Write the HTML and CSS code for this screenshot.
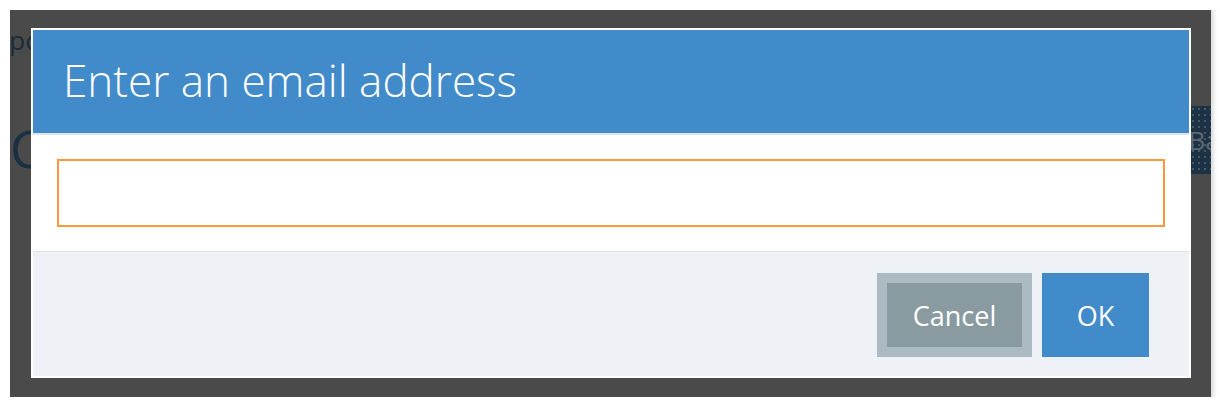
FILE: index.html
```html
<!DOCTYPE html>
<html>
<head>
  <title>Enter an email address</title>
<link rel="stylesheet" href="styles.css"></head>
<body>
  <div class="screen">
    <div class="page">
      <h2 class="page-title">Import your contacts from a list and then add them later</h2>
      <div class="page-row">
        <span class="page-step">C</span>
        <button class="page-back" type="button">Back to list</button>
      </div>
    </div>

    <div class="modal">
      <div class="modal-header">
        <h1>Enter an email address</h1>
      </div>
      <div class="modal-body">
        <input type="email" class="email-input">
      </div>
      <div class="modal-footer">
        <button type="button" class="btn btn-cancel">Cancel</button>
        <button type="button" class="btn btn-ok">OK</button>
      </div>
    </div>
  </div>
</body>
</html>
```

FILE: styles.css
```css
body {
    margin: 10px 0 0 10px;
    background: #ffffff;
    font-family: "Open Sans", "Liberation Sans", sans-serif;
  }

  .screen {
    position: relative;
    width: 1201px;
    height: 387px;
    background: #4a4a4a;
    overflow: hidden;
    box-shadow: 0 0 5px 2px rgba(0, 0, 0, 0.18);
  }

  /* dimmed page behind the dialog */
  .page {
    padding-top: 10px;
  }

  .page-title {
    margin: 0 0 0 -32px;
    font-size: 26px;
    font-weight: 400;
    line-height: 40px;
    color: #1b2b3b;
    white-space: nowrap;
  }

  .page-row {
    display: flex;
    align-items: flex-start;
    margin-top: 52px;
  }

  .page-step {
    margin: 10px 0 0 0;
    font-size: 52px;
    line-height: 52px;
    color: #1b2f44;
  }

  .page-back {
    flex-shrink: 0;
    margin-left: auto;
    margin-right: -130px;
    margin-top: -6px;
    height: 68px;
    padding: 0 22px;
    border: none;
    background-color: #1e3246;
    background-image: radial-gradient(rgba(120, 140, 160, 0.45) 0.8px, transparent 1px);
    background-size: 6px 6px;
    color: #5d6873;
    font-family: "Open Sans", sans-serif;
    font-size: 26px;
    white-space: nowrap;
  }

  /* dialog */
  .modal {
    position: absolute;
    left: 21px;
    top: 18px;
    width: 1156px;
    border: 2px solid #ffffff;
    background: #ffffff;
  }

  .modal-header {
    height: 103px;
    padding: 0 30px;
    background: #428bca;
    border-bottom: 2px solid #e1e6ec;
  }

  .modal-header h1 {
    margin: 0;
    font-size: 44px;
    font-weight: 300;
    line-height: 100px;
    color: #ffffff;
  }

  .modal-body {
    padding: 24px;
  }

  .email-input {
    display: block;
    box-sizing: border-box;
    width: 100%;
    height: 68px;
    border: 2px solid #f79a3e;
    outline: none;
    background: #ffffff;
  }

  .modal-footer {
    display: flex;
    justify-content: flex-end;
    gap: 10px;
    padding: 21px 40px 19px;
    background: #eef1f6;
    border-top: 1px solid #dfe4ea;
  }

  .btn {
    display: flex;
    align-items: center;
    justify-content: center;
    box-sizing: border-box;
    height: 84px;
    border: none;
    color: #ffffff;
    font-family: "Open Sans", sans-serif;
    font-size: 27px;
  }

  .btn-cancel {
    width: 155px;
    border: 10px solid #abbbc3;
    background: #8a9aa1;
  }

  .btn-ok {
    width: 107px;
    background: #428bca;
  }
```
